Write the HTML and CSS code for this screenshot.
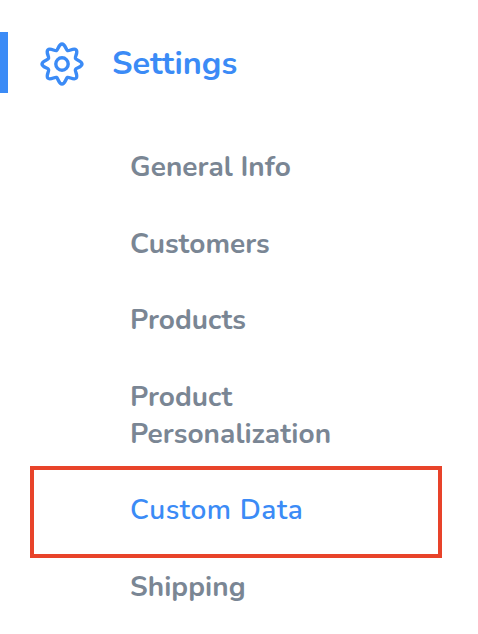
FILE: index.html
```html
<!DOCTYPE html>
<html lang="en">
<head>
    <meta charset="UTF-8">
    <title>Settings</title>
    <link rel="stylesheet" href="styles.css">
</head>
<body>
    <div class="section-header">
        <svg class="gear" viewBox="0 0 48 48" fill="none" stroke="#3b8bf6" stroke-width="3.4" stroke-linejoin="round">
            <circle cx="24" cy="24" r="6.2"/>
            <path d="M24 4C27.2 4 27.89 9.91 29.55 10.6S35.88 7.6 38.14 9.86S36.71 16.79 37.4 18.45S44 20.8 44 24S38.09 27.89 37.4 29.55S40.4 35.88 38.14 38.14S31.21 36.71 29.55 37.4S27.2 44 24 44S20.11 38.09 18.45 37.4S12.12 40.4 9.86 38.14S11.29 31.21 10.6 29.55S4 27.2 4 24S9.91 20.11 10.6 18.45S7.6 12.12 9.86 9.86S16.79 11.29 18.45 10.6S20.8 4 24 4Z"/>
        </svg>
        <span class="section-title">Settings</span>
    </div>

    <ul class="menu">
        <li class="menu-item">General Info</li>
        <li class="menu-item">Customers</li>
        <li class="menu-item">Products</li>
        <li class="menu-item">Product Personalization</li>
        <li class="menu-item active">Custom Data</li>
        <li class="menu-item">Shipping</li>
    </ul>
</body>
</html>
```

FILE: styles.css
```css
html, body {
    height: 100%;
}
body {
    margin: 0;
    padding-top: 32px;
    box-sizing: border-box;
    overflow: hidden;
    background: #fff;
    font-family: Nunito, Lato, "Open Sans", sans-serif;
    font-weight: 700;
}
.section-header {
    display: flex;
    align-items: center;
    gap: 26px;
    height: 61px;
    padding-left: 30px;
    border-left: 8px solid #3b8bf6;
    box-sizing: border-box;
}
.gear {
    width: 48px;
    height: 48px;
    margin-top: 2px;
}
.section-title {
    font-size: 32.5px;
    color: #3b8bf6;
}
.menu {
    list-style: none;
    margin: 36.5px 0 0 30px;
    padding: 0;
    width: 412px;
}
.menu-item {
    box-sizing: border-box;
    padding: 19.5px 100px 20px 100px;
    font-size: 28px;
    line-height: 37px;
    letter-spacing: 0.05px;
    color: #7a8694;
}
/* the box sits over its neighbours' padding, so the rows keep their pitch */
.menu-item.active {
    margin: -7px 0 -9px;
    padding: 22.5px 96px 25px 96px;
    font-weight: 600;
    letter-spacing: 0.6px;
    color: #3b8bf6;
    border: 4px solid #e8432a;
}
```
